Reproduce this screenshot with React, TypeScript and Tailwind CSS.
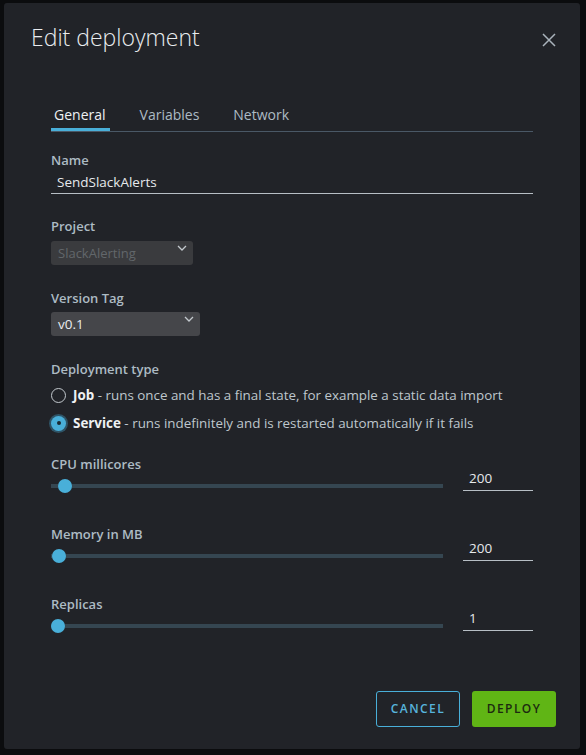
import { useState } from "react";

const FONT = { fontFamily: '"Open Sans", "Liberation Sans", sans-serif' };

const TABS = ["General", "Variables", "Network"];

const SLIDERS = [
  { label: "CPU millicores", value: "200", thumb: 7 },
  { label: "Memory in MB", value: "200", thumb: 1 },
  { label: "Replicas", value: "1", thumb: 0 },
];

function Chevron() {
  return (
    <svg width="10" height="6" viewBox="0 0 10 6" className="absolute right-[6px] top-[4px]">
      <path d="M1 1l4 4 4-4" fill="none" stroke="#c3c9ce" strokeWidth="1.3" />
    </svg>
  );
}

function FieldLabel({ children }: { children: React.ReactNode }) {
  return <div className="text-[13px] leading-[16px] font-semibold text-[#adbbc4]">{children}</div>;
}

function SliderField({ label, value, thumb }: (typeof SLIDERS)[number]) {
  return (
    <div>
      <FieldLabel>{label}</FieldLabel>
      <div className="mt-[-2px] flex gap-[20px]">
        {/* track */}
        <div className="relative w-[392px] pt-[14px]">
          <div className="h-[4px] bg-[#354651]" />
          <div
            className="absolute top-[9px] w-[14px] h-[14px] rounded-full bg-[#49afd9]"
            style={{ left: thumb }}
          />
        </div>
        {/* value */}
        <div className="w-[70px] border-b border-[#b7bec5] pl-[6px] pb-[4px] text-[13.5px] leading-[16px] text-[#e6e9ec]">
          {value}
        </div>
      </div>
    </div>
  );
}

function RadioRow({ checked, title, text }: { checked?: boolean; title: string; text: string }) {
  return (
    <div className="flex items-center h-[20px] gap-[7px]">
      {checked ? (
        <span className="w-[15px] h-[15px] rounded-full bg-[#49afd9] shadow-[0_0_0_2px_rgba(73,175,217,0.35)] flex items-center justify-center">
          <span className="w-[4px] h-[4px] rounded-full bg-[#1b2a32]" />
        </span>
      ) : (
        <span className="w-[15px] h-[15px] rounded-full border-[1.5px] border-[#c3c9ce]" />
      )}
      <span className="text-[13.4px] leading-[20px] text-[#bfc7cd]">
        <span className="font-bold text-[#eef1f3]">{title}</span> - {text}
      </span>
    </div>
  );
}

export default function App() {
  const [tab, setTab] = useState("General");

  return (
    <div className="w-[586px] h-[755px] bg-[#0b0c0e] pt-[3px] pl-[4px] overflow-hidden" style={FONT}>
      <div className="w-[576px] h-[746px] bg-[#212328] rounded-[3px] flex flex-col pt-[20px]">
        {/* header */}
        <div className="flex justify-between pl-[27px] pr-[24px]">
          <h1 className="text-[23px] leading-[28px] font-light text-[#e9ecef]">Edit deployment</h1>
          <svg width="14" height="14" viewBox="0 0 14 14" className="mt-[10px]">
            <path d="M1 1l12 12M13 1L1 13" stroke="#a9b3bb" strokeWidth="1.5" />
          </svg>
        </div>

        <div className="px-[47px]">
          {/* tabs */}
          <div className="mt-[54px] flex gap-[27px] border-b border-[#4a5866]">
            {TABS.map((t) => (
              <button
                key={t}
                onClick={() => setTab(t)}
                className={
                  t === tab
                    ? "pl-[3px] pr-[4px] pb-[3px] border-b-[3px] border-[#49afd9] text-[14px] leading-[20px] text-[#eef1f3]"
                    : "pl-[3px] pr-[4px] pb-[3px] border-b-[3px] border-transparent text-[14px] leading-[20px] text-[#adbbc4]"
                }
              >
                {t}
              </button>
            ))}
          </div>

          {/* name */}
          <div className="mt-[20px]">
            <FieldLabel>Name</FieldLabel>
            <div className="mt-[6px] border-b border-[#b7bec5] pl-[6px] pb-[3px] text-[13.5px] leading-[16px] text-[#e6e9ec]">
              SendSlackAlerts
            </div>
          </div>

          {/* project */}
          <div className="mt-[24px]">
            <FieldLabel>Project</FieldLabel>
            <div className="relative mt-[7px] w-[142px] h-[24px] rounded-[3px] bg-[#3a3b3e] pl-[7px] text-[13px] leading-[24px] text-[#62676b]">
              SlackAlerting
              <Chevron />
            </div>
          </div>

          {/* version tag */}
          <div className="mt-[25px]">
            <FieldLabel>Version Tag</FieldLabel>
            <div className="relative mt-[6px] w-[149px] h-[24px] rounded-[3px] bg-[#45464a] pl-[7px] text-[13.5px] leading-[24px] text-[#e9ecef]">
              v0.1
              <Chevron />
            </div>
          </div>

          {/* deployment type */}
          <div className="mt-[25px]">
            <FieldLabel>Deployment type</FieldLabel>
            <div className="mt-[8px] flex flex-col gap-[8px]">
              <RadioRow title="Job" text="runs once and has a final state, for example a static data import" />
              <RadioRow checked title="Service" text="runs indefinitely and is restarted automatically if it fails" />
            </div>
          </div>

          {/* sliders */}
          <div className="mt-[23px] flex flex-col gap-[35px]">
            {SLIDERS.map((s) => (
              <SliderField key={s.label} {...s} />
            ))}
          </div>
        </div>

        {/* footer */}
        <div className="mt-[60px] flex justify-end gap-[12px] pr-[24px]">
          <button className="w-[84px] h-[36px] rounded-[3px] border border-[#49afd9] text-[12px] font-semibold tracking-[0.12em] text-[#57b3dc]">
            CANCEL
          </button>
          <button className="w-[84px] h-[36px] rounded-[3px] bg-[#60b515] text-[12px] font-semibold tracking-[0.12em] text-[#1c2a10]">
            DEPLOY
          </button>
        </div>
      </div>
    </div>
  );
}
